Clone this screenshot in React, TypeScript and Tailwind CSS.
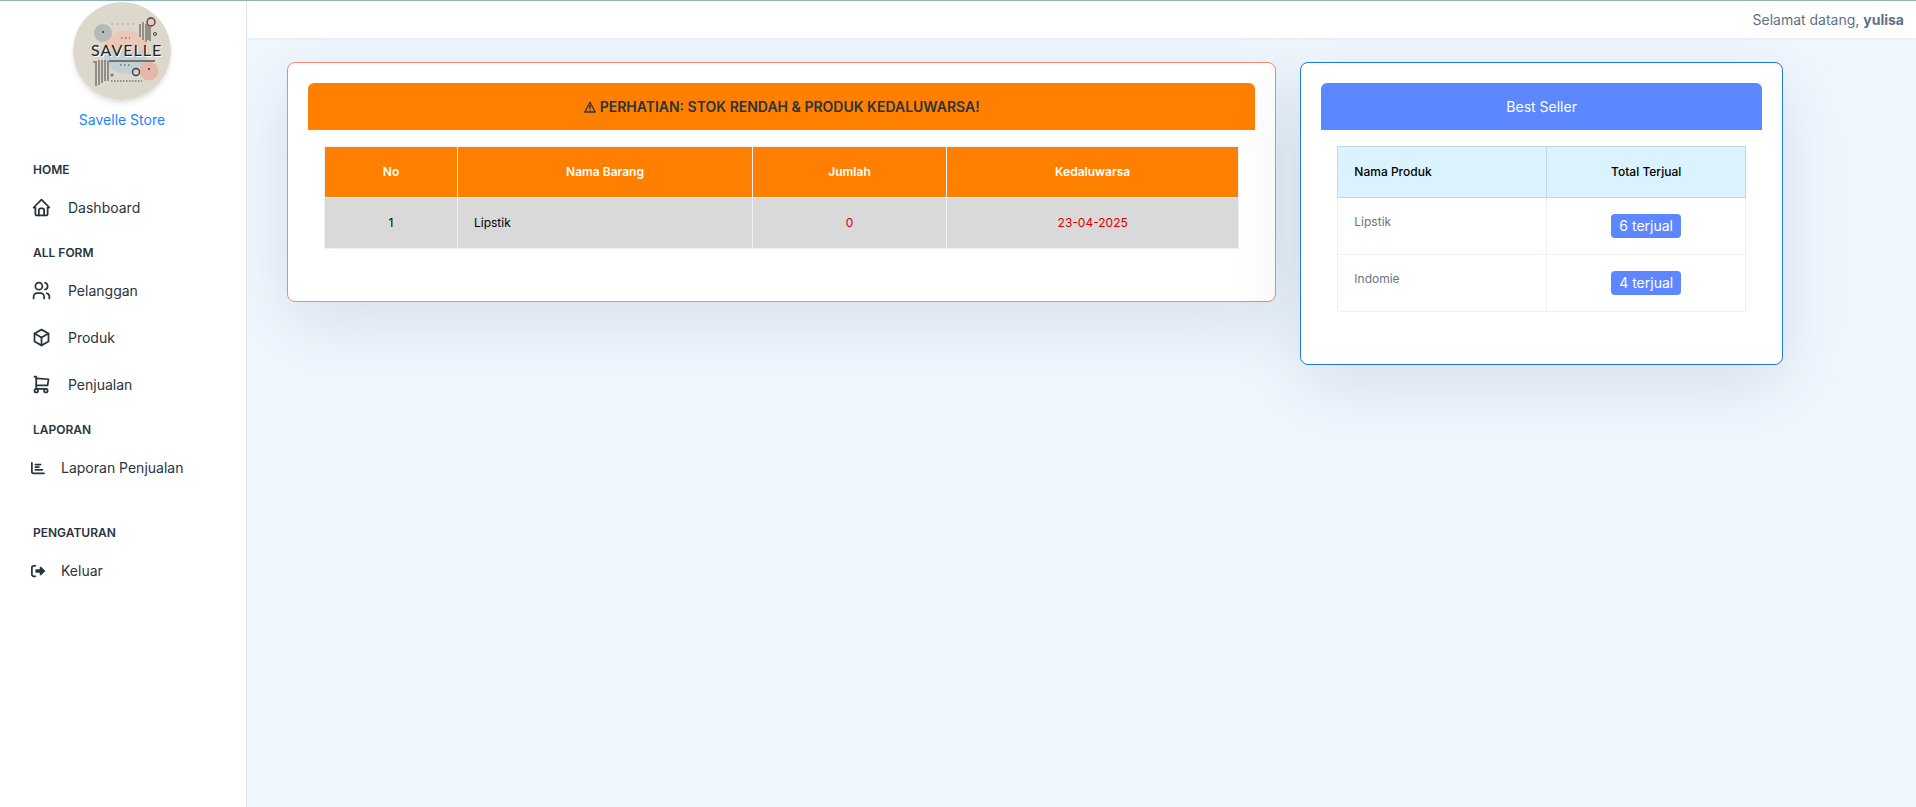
import type { ReactNode } from 'react';
import { FaChartBar, FaRightFromBracket } from 'react-icons/fa6';
import { TbBox, TbHome, TbShoppingCart, TbUsers } from 'react-icons/tb';

type MenuItem = { label: string; icon: ReactNode };
type MenuGroup = { title: string; items: MenuItem[] };

const MENU: MenuGroup[] = [
  { title: 'HOME', items: [{ label: 'Dashboard', icon: <TbHome size={21} /> }] },
  {
    title: 'ALL FORM',
    items: [
      { label: 'Pelanggan', icon: <TbUsers size={21} /> },
      { label: 'Produk', icon: <TbBox size={21} /> },
      { label: 'Penjualan', icon: <TbShoppingCart size={21} /> },
    ],
  },
  { title: 'LAPORAN', items: [{ label: 'Laporan Penjualan', icon: <FaChartBar size={14} /> }] },
  { title: 'PENGATURAN', items: [{ label: 'Keluar', icon: <FaRightFromBracket size={14} /> }] },
];

const LOW_STOCK = [{ no: 1, name: 'Lipstik', qty: 0, expired: '23-04-2025' }];

const BEST_SELLER = [
  { name: 'Lipstik', sold: 6 },
  { name: 'Indomie', sold: 4 },
];

function Logo() {
  return (
    <svg viewBox="0 0 98 98" className="size-[98px] rounded-full shadow-md" role="img" aria-label="Savelle">
      <circle cx="49" cy="49" r="49" fill="#dcd8cc" />
      <path d="M30 51a23 23 0 0 1 46 0z" fill="#ecc8bb" />
      <path d="M30 49a23 23 0 0 0 46 0z" fill="#c3d0d3" />
      <circle cx="30" cy="31" r="9" fill="#b4bab8" />
      <circle cx="30" cy="30" r="1" fill="#333" />
      <circle cx="76" cy="69" r="9.5" fill="#e5b7a8" />
      <circle cx="76" cy="67" r="1" fill="#333" />
      <circle cx="78" cy="20" r="4" fill="#ecc8bb" stroke="#4a3a36" strokeWidth="1.3" />
      <circle cx="82" cy="32" r="1.5" fill="none" stroke="#444" />
      <circle cx="63" cy="70" r="3.5" fill="none" stroke="#3c4040" strokeWidth="1.4" />
      <circle cx="39" cy="73" r="1.5" fill="#777" />
      <path d="M67 22v13M70 20v18M73 22v18M75 23v15M77 25v14" stroke="#3d3a36" strokeWidth="0.9" />
      <path d="M21 59v2M23 59v25M26 58v25M29 58v23M32 58v21M35 59v20" stroke="#4a4641" strokeWidth="1" />
      <path d="M36 59h46" stroke="#555" strokeWidth="1.3" />
      <path d="M48 36h9M47 63h11" stroke="#444" strokeWidth="1.2" strokeDasharray="1.5 2.5" />
      <path d="M38 22h3M44 22h20" stroke="#a5a298" strokeWidth="1.2" strokeDasharray="2 3" />
      <path d="M38 79h31" stroke="#8f8c84" strokeWidth="1.8" strokeDasharray="1.5 1.5" />
      <text x="19" y="55" fontSize="16" fill="#fff" fontFamily="Lato, sans-serif" letterSpacing="1">
        SAVELLE
      </text>
      <text x="18" y="54" fontSize="16" fill="#222" fontFamily="Lato, sans-serif" letterSpacing="1">
        SAVELLE
      </text>
    </svg>
  );
}

function Sidebar() {
  return (
    <aside className="relative z-10 w-[247px] shrink-0 border-r border-[#e0e6eb] bg-white">
      <a href="#" className="flex flex-col items-center pt-px pr-0.5">
        <Logo />
        <span className="mt-2 text-sm leading-6 text-[#1b84ff]">Savelle Store</span>
      </a>
      <nav className="mt-4">
        {MENU.map((group) => (
          <div key={group.title} className={group.title === 'PENGATURAN' ? 'mt-5' : ''}>
            <h2 className="px-[33px] pt-3 pb-1 text-xs leading-5 font-semibold text-[#29343d]">{group.title}</h2>
            <ul>
              {group.items.map((item) => (
                <li key={item.label}>
                  <a href="#" className="flex h-[47px] items-center gap-4 pl-[31px] text-sm text-[#29343d]">
                    {item.icon}
                    <span>{item.label}</span>
                  </a>
                </li>
              ))}
            </ul>
          </div>
        ))}
      </nav>
    </aside>
  );
}

function LowStockCard() {
  return (
    <section className="rounded-lg border border-[#f8876b] bg-white p-5 shadow-[0_20px_72px_rgba(20,50,65,0.12)] lg:col-span-2">
      <h2 className="flex h-[47px] items-center justify-center gap-1 rounded-t-md bg-[#ff8000] text-sm font-semibold text-[#29343d]">
        <svg viewBox="0 0 12 12" className="size-3" fill="none" stroke="currentColor" aria-hidden="true">
          <path d="M6 1.2 11.2 11H.8z" strokeWidth="1.3" strokeLinejoin="round" />
          <path d="M6 4v3.8M6 8.6v1.2" strokeWidth="1.5" />
        </svg>
        PERHATIAN: STOK RENDAH &amp; PRODUK KEDALUWARSA!
      </h2>
      <div className="p-4">
        <table className="mb-4 w-full border-collapse text-center text-xs text-black">
          <thead>
            <tr className="h-[51px] bg-[#ff8000] text-white">
              <th className="w-[133px] border border-[#ebf1f6] font-semibold">No</th>
              <th className="w-[295px] border border-[#ebf1f6] font-semibold">Nama Barang</th>
              <th className="w-[194px] border border-[#ebf1f6] font-semibold">Jumlah</th>
              <th className="border border-[#ebf1f6] font-semibold">Kedaluwarsa</th>
            </tr>
          </thead>
          <tbody>
            {LOW_STOCK.map((row) => (
              <tr key={row.no} className="h-[51px] bg-[#d9d9d9]">
                <td className="border border-[#ebf1f6]">{row.no}</td>
                <td className="border border-[#ebf1f6] px-4 text-left">{row.name}</td>
                <td className="border border-[#ebf1f6] text-[#db0000]">{row.qty}</td>
                <td className="border border-[#ebf1f6] text-[#db0000]">{row.expired}</td>
              </tr>
            ))}
          </tbody>
        </table>
      </div>
    </section>
  );
}

function BestSellerCard() {
  return (
    <section className="rounded-lg border border-[#1c7ad9] bg-white p-5 shadow-[0_20px_72px_rgba(20,50,65,0.12)]">
      <h2 className="flex h-[47px] items-center justify-center rounded-t-md bg-[#5d87ff] text-sm text-white">Best Seller</h2>
      <div className="p-4">
        <table className="mb-4 w-full border-collapse text-xs text-[#6a7485]">
          <thead>
            <tr className="h-[51px] bg-[#daf3ff] text-black">
              <th className="w-[209px] border border-[#c0d9e6] px-4 text-left font-medium">Nama Produk</th>
              <th className="border border-[#c0d9e6] px-4 font-medium">Total Terjual</th>
            </tr>
          </thead>
          <tbody>
            {BEST_SELLER.map((row) => (
              <tr key={row.name} className="h-[57px]">
                <td className="border border-[#ebf1f6] px-4 py-4 align-top">{row.name}</td>
                <td className="border border-[#ebf1f6] px-4 text-center">
                  <span className="inline-flex h-6 items-center rounded bg-[#5d87ff] px-2 text-sm text-white">{row.sold} terjual</span>
                </td>
              </tr>
            ))}
          </tbody>
        </table>
      </div>
    </section>
  );
}

export default function App() {
  return (
    <div className="flex min-h-screen border-t border-[#8fb3b3] bg-[#f0f7ff] font-['Inter',sans-serif]">
      <Sidebar />
      <div className="min-w-0 flex-1">
        <header className="relative z-10 flex h-[37px] items-center justify-end bg-white px-3 text-sm text-[#5f6f88] shadow-xs">
          <p>
            Selamat datang, <strong className="font-bold">yulisa</strong>
          </p>
        </header>
        <main className="pt-6 pl-10">
          <div className="grid max-w-[1496px] items-start gap-6 lg:grid-cols-3">
            <LowStockCard />
            <BestSellerCard />
          </div>
        </main>
      </div>
    </div>
  );
}
